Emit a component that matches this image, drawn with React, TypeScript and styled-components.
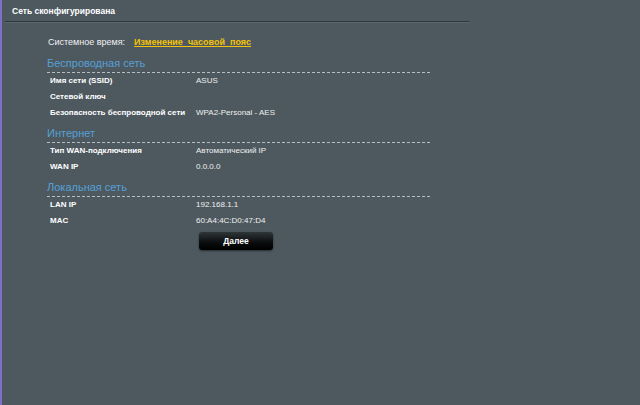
import React from "react";
import styled, { createGlobalStyle } from "styled-components";

const GlobalStyle = createGlobalStyle`
  html, body {
    margin: 0;
    padding: 0;
    background: #4e595f;
  }
  body {
    font-family: "Liberation Sans", Arial, sans-serif;
  }
`;

interface Row {
  label: string;
  value: string;
}

interface Section {
  title: string;
  rows: Row[];
}

const sections: Section[] = [
  {
    title: "Беспроводная сеть",
    rows: [
      { label: "Имя сети (SSID)", value: "ASUS" },
      { label: "Сетевой ключ", value: "" },
      { label: "Безопасность беспроводной сети", value: "WPA2-Personal - AES" },
    ],
  },
  {
    title: "Интернет",
    rows: [
      { label: "Тип WAN-подключения", value: "Автоматический IP" },
      { label: "WAN IP", value: "0.0.0.0" },
    ],
  },
  {
    title: "Локальная сеть",
    rows: [
      { label: "LAN IP", value: "192.168.1.1" },
      { label: "MAC", value: "60:A4:4C:D0:47:D4" },
    ],
  },
];

const App = () => {
  return (
    <Page>
      <GlobalStyle />
      <Strip />
      <Main>
        <Header>
          <Title>Сеть сконфигурирована</Title>
        </Header>
        <Content>
          <TimeRow>
            <TimeLabel>Системное время:</TimeLabel>
            <TimeLink href="#">Изменение&nbsp; часовой&nbsp; пояс</TimeLink>
          </TimeRow>
          {sections.map((section, index) => (
            <Block key={section.title} $first={index === 0}>
              <Heading>{section.title}</Heading>
              {section.rows.map((row) => (
                <InfoRow key={row.label}>
                  <Label>{row.label}</Label>
                  <Value>{row.value}</Value>
                </InfoRow>
              ))}
            </Block>
          ))}
          <ButtonRow>
            <NextButton>Далее</NextButton>
          </ButtonRow>
        </Content>
      </Main>
    </Page>
  );
};

const Page = styled.div`
  display: flex;
  width: 640px;
  height: 405px;
  background: #4e595f;
  overflow: hidden;
`;

const Strip = styled.div`
  width: 2px;
  flex-shrink: 0;
  background: #7b72c8;
`;

const Main = styled.div`
  flex: 1;
  display: flex;
  flex-direction: column;
`;

const Header = styled.div`
  width: 465px;
  height: 22px;
  margin-left: 3px;
  display: flex;
  align-items: center;
  padding-left: 7px;
  box-sizing: border-box;
  border-bottom: 1px solid #2c363b;
  box-shadow: 0 1px 0 #5d686e;
`;

const Title = styled.span`
  color: #ffffff;
  font-size: 8.5px;
  font-weight: bold;
  padding-top: 1px;
`;

const Content = styled.div`
  width: 383px;
  margin-left: 45px;
  padding-top: 13px;
  display: flex;
  flex-direction: column;
`;

const TimeRow = styled.div`
  display: flex;
  align-items: center;
  height: 14px;
  gap: 9px;
  padding-left: 1px;
`;

const TimeLabel = styled.span`
  color: #f0f0f0;
  font-size: 9px;
`;

const TimeLink = styled.a`
  color: #f2c20a;
  font-size: 9px;
  font-weight: bold;
  text-decoration: underline;
`;

const Block = styled.div<{ $first: boolean }>`
  display: flex;
  flex-direction: column;
  margin-top: ${({ $first }) => ($first ? "7px" : "5px")};
`;

const Heading = styled.div`
  color: #56a0d6;
  font-size: 11px;
  line-height: 14px;
  padding-bottom: 2px;
  border-bottom: 1px dashed #b8bfc3;
`;

const InfoRow = styled.div`
  display: flex;
  align-items: center;
  height: 16px;
  padding-bottom: 2px;
  box-sizing: border-box;
  font-size: 8px;
  color: #ffffff;
`;

const Label = styled.span`
  width: 149px;
  padding-left: 3px;
  box-sizing: border-box;
  font-weight: bold;
`;

const Value = styled.span`
  color: #eef0f0;
`;

const ButtonRow = styled.div`
  display: flex;
  padding-left: 152px;
  margin-top: 3px;
`;

const NextButton = styled.button`
  width: 74px;
  height: 18px;
  border: none;
  border-radius: 3px;
  background: linear-gradient(#2f3538, #0a0c0d 60%, #000);
  box-shadow: 0 1px 2px rgba(0, 0, 0, 0.5);
  color: #ffffff;
  font-family: "Liberation Sans", Arial, sans-serif;
  font-size: 8.5px;
  font-weight: bold;
  cursor: pointer;
`;

export default App;
